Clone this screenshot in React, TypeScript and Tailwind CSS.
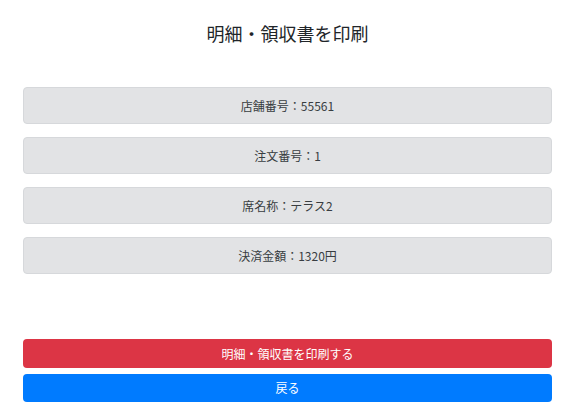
export default function App() {
  const rows = ["店舗番号：55561", "注文番号：1", "席名称：テラス2", "決済金額：1320円"];
  return (
    <div
      className="w-[573px] h-[413px] bg-white pl-[23px] pr-[21px] flex flex-col"
      style={{ fontFamily: '"Noto Sans CJK JP", "Noto Sans", sans-serif' }}
    >
      <h1 className="mt-[20px] h-[27px] leading-[27px] text-[18px] text-center text-[#212529] font-normal">
        明細・領収書を印刷
      </h1>
      <div className="mt-[40px] flex flex-col gap-[13px]">
        {rows.map((r) => (
          <div
            key={r}
            className="h-[37px] rounded-[4px] bg-[#e2e3e5] border border-[#d6d8db] flex items-center justify-center text-[12px] text-[#383d41]"
          >
            {r}
          </div>
        ))}
      </div>
      <button className="mt-[65px] h-[29px] rounded-[4px] bg-[#dc3545] text-white text-[12px] flex items-center justify-center">
        明細・領収書を印刷する
      </button>
      <button className="mt-[6px] h-[28px] rounded-[4px] bg-[#007bff] text-white text-[12px] flex items-center justify-center">
        戻る
      </button>
    </div>
  );
}
